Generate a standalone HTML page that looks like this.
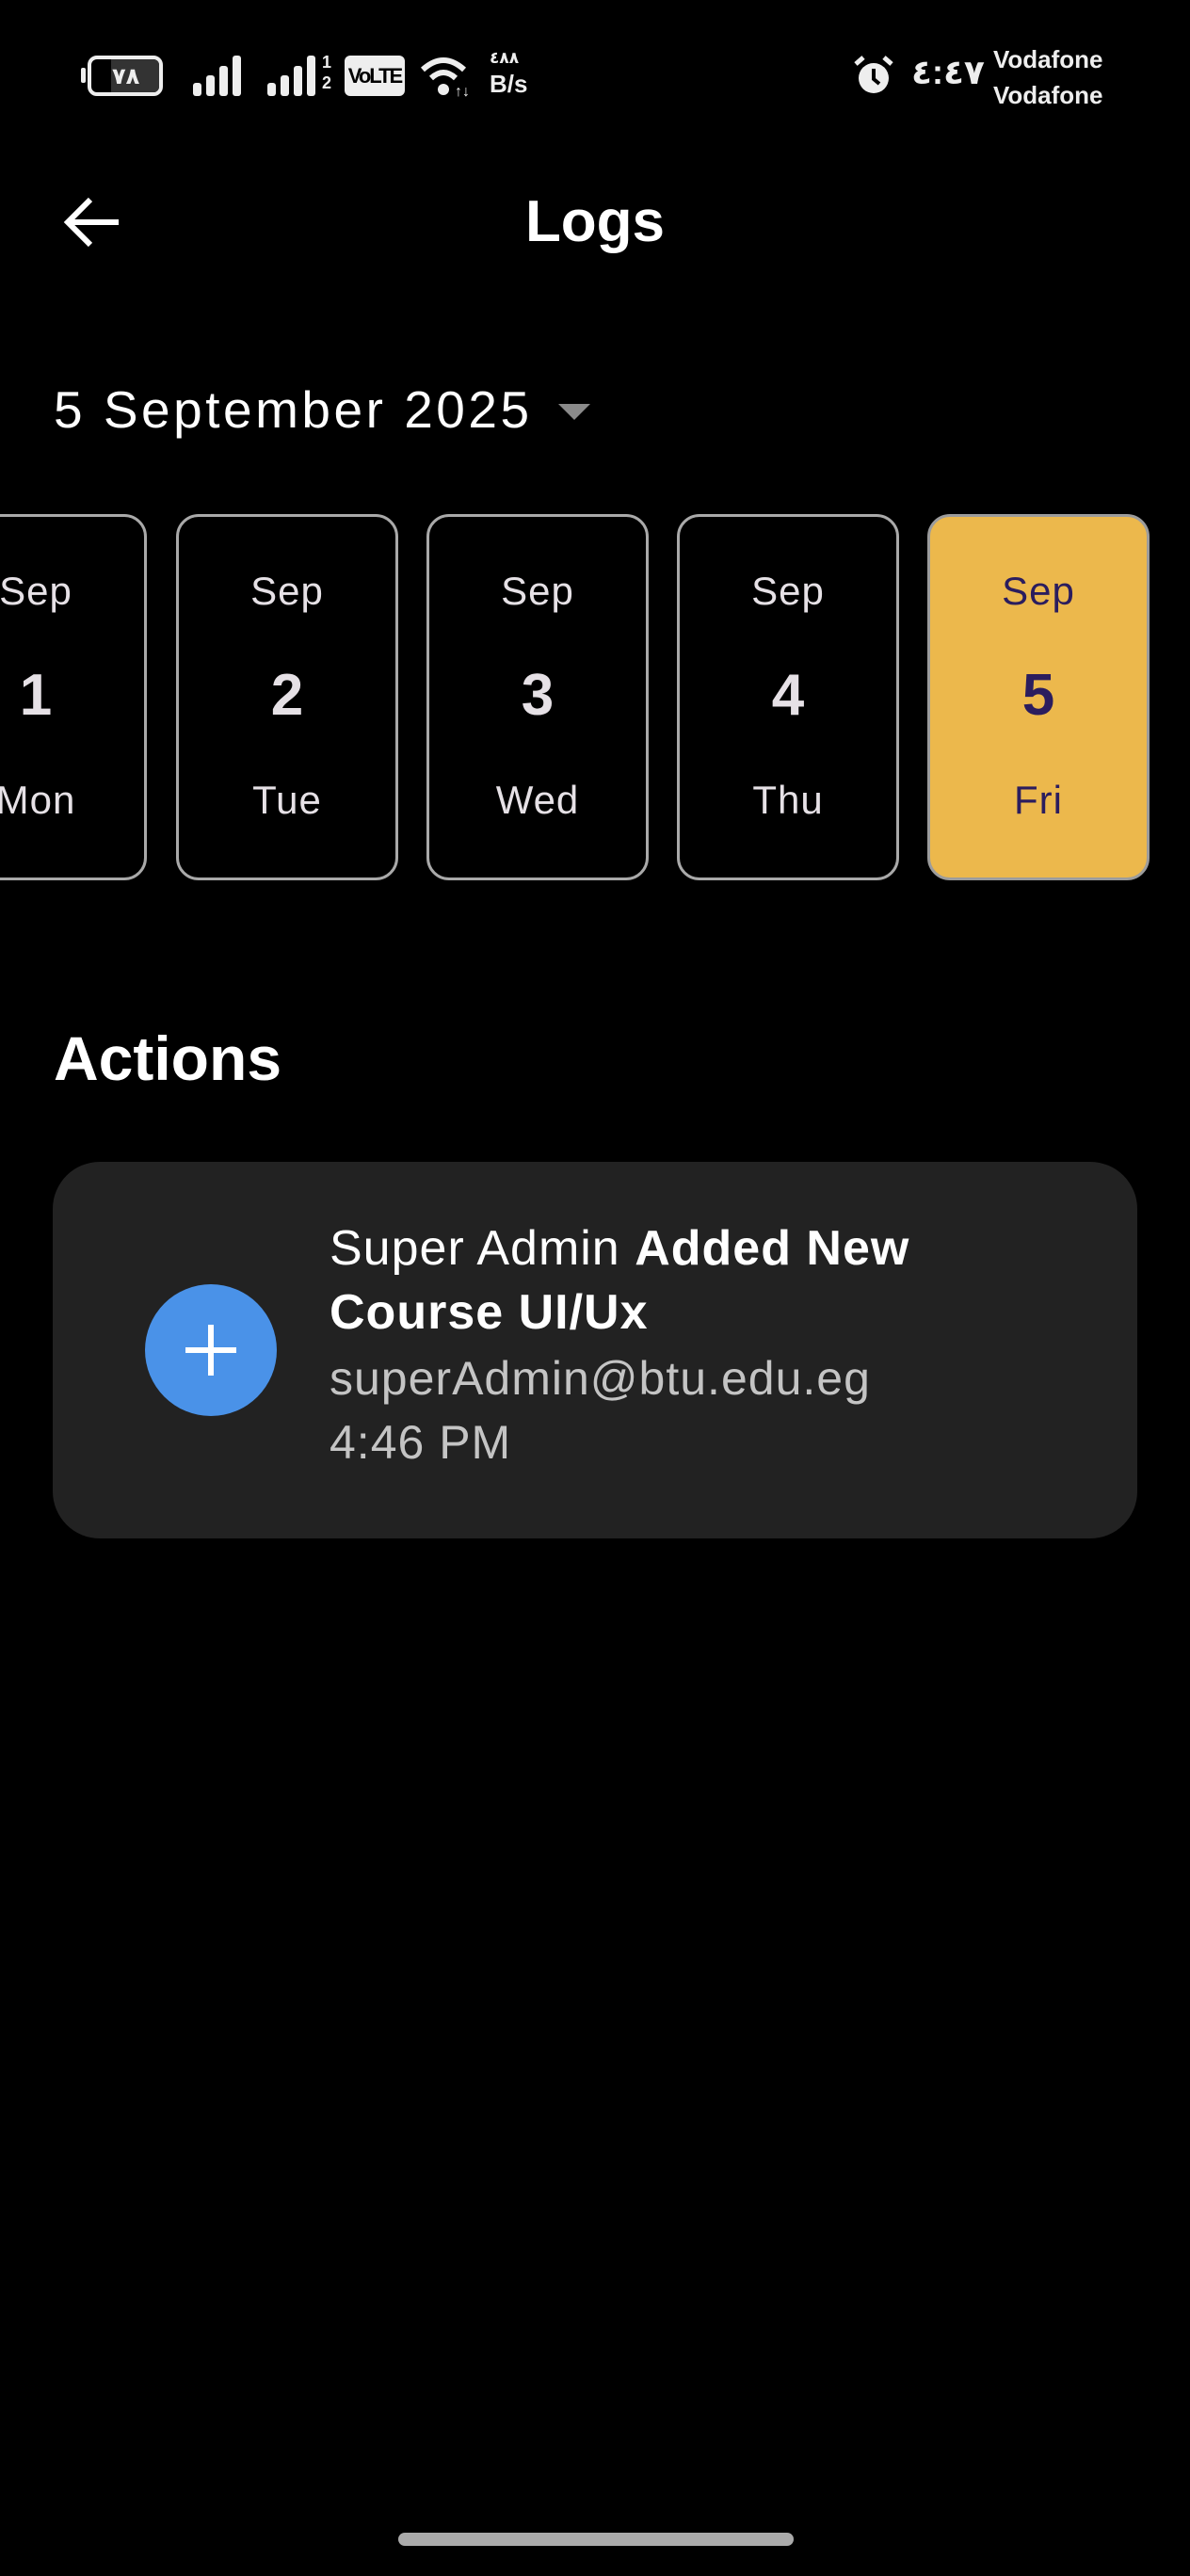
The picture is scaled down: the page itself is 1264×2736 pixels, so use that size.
<!DOCTYPE html>
<html><head><meta charset="utf-8"><style>
*{margin:0;padding:0;box-sizing:border-box}
html,body{width:1264px;height:2736px;background:#000;overflow:hidden;font-family:"Liberation Sans","DejaVu Sans",sans-serif;color:#fff;position:relative}
.abs{position:absolute}
.card{position:absolute;top:546px;width:236px;height:389px;border:3px solid #a9a9a9;border-radius:24px;text-align:center;color:#e6e1e6}
.card .m{position:absolute;left:0;right:0;top:55px;font-size:42px;line-height:48px;letter-spacing:1px}
.card .d{position:absolute;left:0;right:0;top:157px;font-size:62px;font-weight:bold;line-height:66px}
.card .w{position:absolute;left:0;right:0;top:277px;font-size:42px;line-height:48px;letter-spacing:1px}
.sel{background:#ecb84c;border-color:#9c9c9c;color:#2b1d5e}
.bar{position:absolute;bottom:0;background:#eee;border-radius:3px;width:9px}
</style></head><body>
<!-- status bar -->
<div class="abs" style="left:86px;top:72px;width:5px;height:16px;background:#eee;border-radius:2px"></div>
<div class="abs" style="left:93px;top:59px;width:80px;height:43px;border:4px solid #eee;border-radius:10px;overflow:hidden"><div style="position:absolute;left:21px;top:0;width:60px;height:40px;background:#333"></div><div style="position:absolute;left:22px;top:4px;font-size:24px;font-weight:bold;color:#eee">٧٨</div></div>
<div class="abs" style="left:205px;top:59px;width:52px;height:43px">
<div class="bar" style="left:0;height:14px"></div><div class="bar" style="left:14px;height:22px"></div><div class="bar" style="left:28px;height:32px"></div><div class="bar" style="left:42px;height:43px"></div></div>
<div class="abs" style="left:284px;top:59px;width:52px;height:43px">
<div class="bar" style="left:0;height:14px"></div><div class="bar" style="left:14px;height:22px"></div><div class="bar" style="left:28px;height:32px"></div><div class="bar" style="left:42px;height:43px"></div></div>
<div class="abs" style="left:342px;top:55px;font-size:18px;font-weight:bold;line-height:22px;color:#eee">1<br>2</div>
<div class="abs" style="left:366px;top:59px;width:64px;height:43px;background:#eee;border-radius:6px;color:#000;font-size:22px;font-weight:bold;text-align:center;line-height:43px;letter-spacing:-2px">VoLTE</div>
<svg class="abs" style="left:445px;top:58px" width="58" height="46" viewBox="0 0 58 46"><path d="M4 16 Q26 -4 48 16" stroke="#eee" stroke-width="6" fill="none"/><path d="M13 25 Q26 13 39 25" stroke="#eee" stroke-width="6" fill="none"/><circle cx="26" cy="37" r="6" fill="#eee"/><text x="38" y="44" font-size="16" fill="#eee" font-weight="bold">↑↓</text></svg>
<div class="abs" style="left:520px;top:52px;font-size:17px;font-weight:bold;color:#eee">٤٨٨</div>
<div class="abs" style="left:520px;top:74px;font-size:26px;font-weight:bold;color:#eee">B/s</div>
<svg class="abs" style="left:905px;top:58px" width="46" height="46" viewBox="0 0 46 46"><circle cx="23" cy="25" r="16" fill="#eee"/><path d="M23 15 V26 L29 31" stroke="#000" stroke-width="4" fill="none"/><path d="M4 10 L12 3 M42 10 L34 3" stroke="#eee" stroke-width="5"/></svg>
<div class="abs" style="left:968px;top:56px;font-size:36px;font-weight:bold;color:#eee;letter-spacing:3px">٤:٤٧</div>
<div class="abs" style="left:1055px;top:44px;font-size:26px;font-weight:bold;line-height:38px;color:#eee">Vodafone<br>Vodafone</div>
<!-- app bar -->
<svg class="abs" style="left:66px;top:206px" width="64" height="60" viewBox="0 0 64 60"><path d="M60 30 H8 M30 6 L6 30 L30 54" stroke="#fff" stroke-width="6" fill="none"/></svg>
<div class="abs" style="left:0;width:1264px;top:196px;text-align:center;font-size:62px;font-weight:bold;line-height:80px">Logs</div>
<div class="abs" style="left:57px;top:400px;font-size:55px;line-height:70px;letter-spacing:3.5px">5 September 2025</div>
<div class="abs" style="left:593px;top:429px;width:0;height:0;border-left:17px solid transparent;border-right:17px solid transparent;border-top:17px solid #8a8a8a"></div>
<!-- dates -->
<div class="card" style="left:-80px"><div class="m">Sep</div><div class="d">1</div><div class="w">Mon</div></div>
<div class="card" style="left:187px"><div class="m">Sep</div><div class="d">2</div><div class="w">Tue</div></div>
<div class="card" style="left:453px"><div class="m">Sep</div><div class="d">3</div><div class="w">Wed</div></div>
<div class="card" style="left:719px"><div class="m">Sep</div><div class="d">4</div><div class="w">Thu</div></div>
<div class="card sel" style="left:985px"><div class="m">Sep</div><div class="d">5</div><div class="w">Fri</div></div>
<div class="abs" style="left:57px;top:1086px;font-size:66px;font-weight:bold;line-height:76px">Actions</div>
<div class="abs" style="left:56px;top:1234px;width:1152px;height:400px;background:#222;border-radius:50px"></div>
<div class="abs" style="left:154px;top:1364px;width:140px;height:140px;border-radius:50%;background:#4a92e8"></div>
<div class="abs" style="left:197px;top:1431px;width:54px;height:6px;background:#fff"></div>
<div class="abs" style="left:221px;top:1407px;width:6px;height:54px;background:#fff"></div>
<div class="abs" style="left:350px;top:1292px;font-size:52px;line-height:68px;color:#fff;letter-spacing:1px">Super Admin <b>Added New<br>Course UI/Ux</b></div>
<div class="abs" style="left:350px;top:1430px;font-size:50px;line-height:68px;color:#c4c4c4;letter-spacing:1px">superAdmin@btu.edu.eg<br>4:46 PM</div>
<div class="abs" style="left:423px;top:2690px;width:420px;height:14px;border-radius:7px;background:#aaa"></div>
</body></html>
